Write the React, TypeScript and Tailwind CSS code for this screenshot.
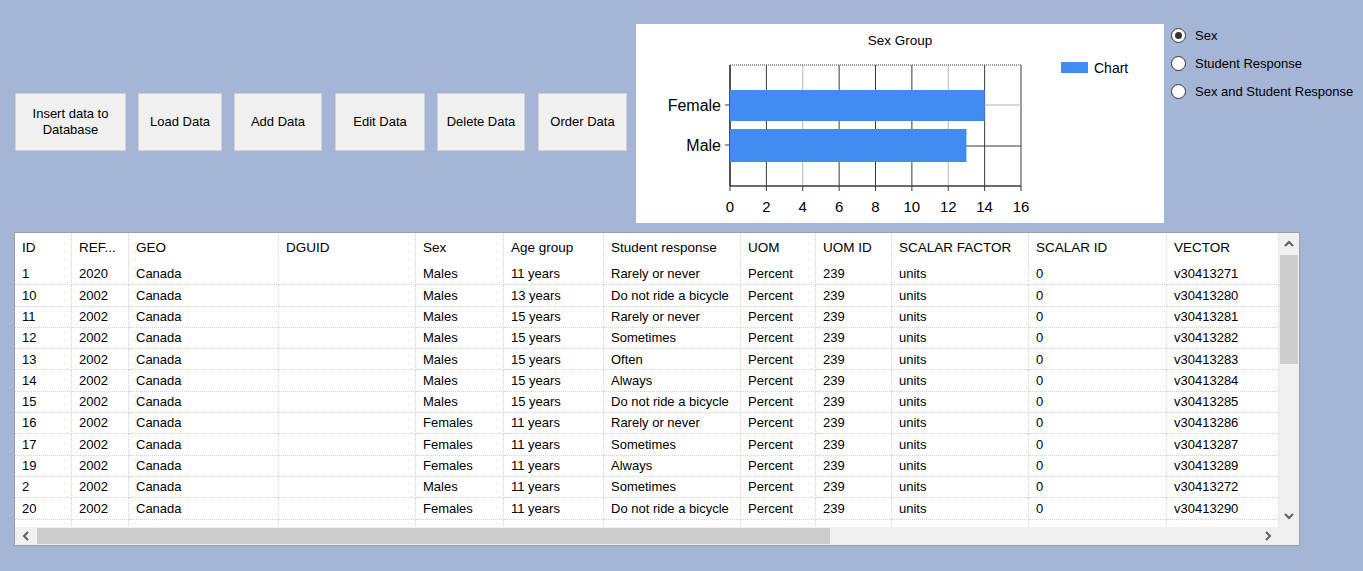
import React from "react"

const rows = [
    ["1", "2020", "Canada", "", "Males", "11 years", "Rarely or never", "Percent", "239", "units", "0", "v30413271"],
    ["10", "2002", "Canada", "", "Males", "13 years", "Do not ride a bicycle", "Percent", "239", "units", "0", "v30413280"],
    ["11", "2002", "Canada", "", "Males", "15 years", "Rarely or never", "Percent", "239", "units", "0", "v30413281"],
    ["12", "2002", "Canada", "", "Males", "15 years", "Sometimes", "Percent", "239", "units", "0", "v30413282"],
    ["13", "2002", "Canada", "", "Males", "15 years", "Often", "Percent", "239", "units", "0", "v30413283"],
    ["14", "2002", "Canada", "", "Males", "15 years", "Always", "Percent", "239", "units", "0", "v30413284"],
    ["15", "2002", "Canada", "", "Males", "15 years", "Do not ride a bicycle", "Percent", "239", "units", "0", "v30413285"],
    ["16", "2002", "Canada", "", "Females", "11 years", "Rarely or never", "Percent", "239", "units", "0", "v30413286"],
    ["17", "2002", "Canada", "", "Females", "11 years", "Sometimes", "Percent", "239", "units", "0", "v30413287"],
    ["19", "2002", "Canada", "", "Females", "11 years", "Always", "Percent", "239", "units", "0", "v30413289"],
    ["2", "2002", "Canada", "", "Males", "11 years", "Sometimes", "Percent", "239", "units", "0", "v30413272"],
    ["20", "2002", "Canada", "", "Females", "11 years", "Do not ride a bicycle", "Percent", "239", "units", "0", "v30413290"],
    ["", "", "", "", "", "", "", "", "", "", "", ""],
]

const headers = ["ID", "REF...", "GEO", "DGUID", "Sex", "Age group", "Student response", "UOM", "UOM ID", "SCALAR FACTOR", "SCALAR ID", "VECTOR"]

const cols = "grid grid-cols-[57px_57px_150px_137px_88px_100px_137px_75px_76px_137px_138px_112px]"

const buttons = [
    { label: "Insert data to\nDatabase", cls: "w-[111px]" },
    { label: "Load Data", cls: "w-[84px] ml-[12px]" },
    { label: "Add Data", cls: "w-[88px] ml-[12px]" },
    { label: "Edit Data", cls: "w-[90px] ml-[13px]" },
    { label: "Delete Data", cls: "w-[88px] ml-[12px]" },
    { label: "Order Data", cls: "w-[89px] ml-[13px]" },
]

function SexChart() {
    const x0 = 94
    const unit = 291 / 16
    const ticks = [0, 2, 4, 6, 8, 10, 12, 14, 16]
    return (
        <svg width="528" height="199" viewBox="0 0 528 199" fontFamily="'Liberation Sans', Arial, sans-serif">
            <text x="264" y="21" fontSize="13.5" textAnchor="middle" fill="#000">Sex Group</text>
            {/* grid */}
            {ticks.map((t) => {
                const x = x0 + t * unit
                const light = t === 4 || t === 12
                return (
                    <g key={t}>
                        <line x1={x} y1={41} x2={x} y2={162} stroke={light ? "#b4b4b4" : "#3a3a3a"} strokeWidth="1" />
                        <line x1={x} y1={162} x2={x} y2={167} stroke="#3a3a3a" strokeWidth="1" />
                        <text x={x} y={188} fontSize="15" textAnchor="middle" fill="#000">{t}</text>
                    </g>
                )
            })}
            <line x1={x0} y1={81} x2={385} y2={81} stroke="#b4b4b4" strokeWidth="1" />
            <line x1={x0} y1={122} x2={385} y2={122} stroke="#3a3a3a" strokeWidth="1" />
            <line x1={x0} y1={41} x2={385} y2={41} stroke="#3a3a3a" strokeWidth="1" strokeDasharray="1 1" />
            <line x1={x0} y1={162} x2={385} y2={162} stroke="#3a3a3a" strokeWidth="1.5" />
            <line x1={x0} y1={41} x2={x0} y2={162} stroke="#3a3a3a" strokeWidth="1.5" />
            {/* bars */}
            <rect x={x0} y={66} width={14 * unit} height={31} fill="#418cf0" />
            <rect x={x0} y={105} width={13 * unit} height={33} fill="#418cf0" />
            {/* y axis */}
            <line x1={x0 - 5} y1={81} x2={x0} y2={81} stroke="#3a3a3a" />
            <line x1={x0 - 5} y1={121} x2={x0} y2={121} stroke="#3a3a3a" />
            <text x={85} y={87} fontSize="16" textAnchor="end" fill="#000">Female</text>
            <text x={85} y={127} fontSize="16" textAnchor="end" fill="#000">Male</text>
            {/* legend */}
            <rect x={425} y={38} width={27} height={11} fill="#418cf0" />
            <text x={458} y={49} fontSize="14" fill="#000">Chart</text>
        </svg>
    )
}

function Radio({ label, checked }: { label: string; checked?: boolean }) {
    return (
        <div className="flex items-center h-[14px]">
            <div className="w-[15px] h-[15px] rounded-full border border-[#333333] bg-white flex items-center justify-center">
                {checked && <div className="w-[7px] h-[7px] rounded-full bg-[#333333]"></div>}
            </div>
            <span className="ml-[9px] text-[13px] text-black leading-none">{label}</span>
        </div>
    )
}

function Chevron({ dir }: { dir: "up" | "down" | "left" | "right" }) {
    const d = {
        up: "M1 6 L5 2 L9 6",
        down: "M1 2 L5 6 L9 2",
        left: "M6 1 L2 5 L6 9",
        right: "M2 1 L6 5 L2 9",
    }[dir]
    const vertical = dir === "up" || dir === "down"
    return (
        <svg width={vertical ? 10 : 8} height={vertical ? 8 : 10} viewBox={vertical ? "0 0 10 8" : "0 0 8 10"}>
            <path d={d} fill="none" stroke="#606060" strokeWidth="2" />
        </svg>
    )
}

export default function App() {
    return (
        <div className="w-[1363px] h-[571px] bg-[#a4b5d6] overflow-hidden font-['Liberation_Sans',Arial,sans-serif] text-black">
            <div className="flex items-start pt-[24px]">
                <div className="flex ml-[15px] mt-[69px]">
                    {buttons.map((b) => (
                        <div
                            key={b.label}
                            className={`${b.cls} h-[58px] bg-[#f0f0f0] border border-[#d2d2d2] flex items-center justify-center text-center text-[13px] leading-[16px] whitespace-pre-line`}
                        >
                            {b.label}
                        </div>
                    ))}
                </div>
                <div className="ml-[9px] w-[528px] h-[199px] bg-white">
                    <SexChart />
                </div>
                <div className="ml-[7px] mt-[4px] flex flex-col gap-[14px]">
                    <Radio label="Sex" checked />
                    <Radio label="Student Response" />
                    <Radio label="Sex and Student Response" />
                </div>
            </div>

            <div className="ml-[14px] mt-[9px] w-[1286px] h-[314px] border border-[#9a9fa8] bg-white flex flex-col">
                <div className="flex h-[294px]">
                    <div className="w-[1264px] overflow-hidden text-[13px]">
                        <div className={`${cols} h-[31px]`}>
                            {headers.map((h) => (
                                <div key={h} className="pl-[7px] flex items-center border-r border-dotted border-[#d4d4d4] text-[13.5px] whitespace-nowrap overflow-hidden">
                                    {h}
                                </div>
                            ))}
                        </div>
                        {rows.map((r, i) => (
                            <div key={i} className={`${cols} h-[21.3px]`}>
                                {r.map((c, j) => (
                                    <div key={j} className="pl-[7px] flex items-center border-r border-b border-dotted border-[#d4d4d4] whitespace-nowrap overflow-hidden">
                                        {c}
                                    </div>
                                ))}
                            </div>
                        ))}
                    </div>
                    <div className="w-[20px] bg-[#f0f0f0] flex flex-col">
                        <div className="h-[22px] flex items-center justify-center">
                            <Chevron dir="up" />
                        </div>
                        <div className="h-[109px] mx-[1px] bg-[#cdcdcd]"></div>
                        <div className="flex-1"></div>
                        <div className="h-[22px] flex items-center justify-center">
                            <Chevron dir="down" />
                        </div>
                    </div>
                </div>
                <div className="flex h-[18px]">
                    <div className="w-[1264px] bg-[#f0f0f0] flex items-center">
                        <div className="w-[22px] flex items-center justify-center">
                            <Chevron dir="left" />
                        </div>
                        <div className="w-[793px] h-[16px] bg-[#cdcdcd]"></div>
                        <div className="flex-1"></div>
                        <div className="w-[22px] flex items-center justify-center">
                            <Chevron dir="right" />
                        </div>
                    </div>
                    <div className="w-[20px] bg-[#f0f0f0]"></div>
                </div>
            </div>
        </div>
    )
}
